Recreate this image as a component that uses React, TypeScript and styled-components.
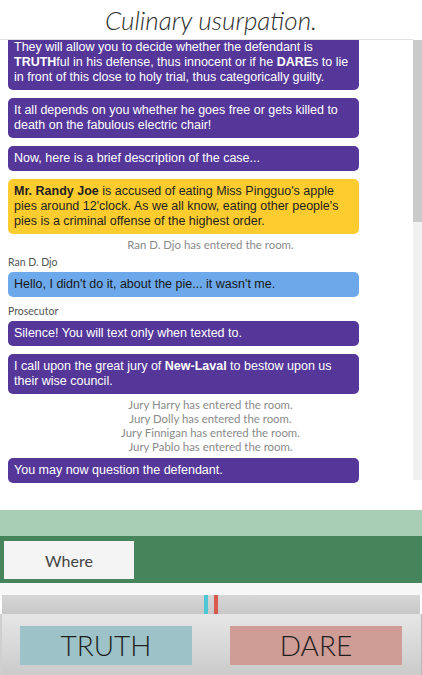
import React from "react";
import styled, { createGlobalStyle } from "styled-components";

const GlobalStyle = createGlobalStyle`
  html, body { margin: 0; padding: 0; background: #ffffff; overflow: hidden; }
  * { box-sizing: border-box; }
`;

const Page = styled.div`
  width: 422px;
  height: 675px;
  display: flex;
  flex-direction: column;
  background: #ffffff;
  overflow: hidden;
`;

const Header = styled.header`
  height: 40px;
  margin-right: 9px;
  border-bottom: 1px solid #e2e2e2;
  display: flex;
  align-items: center;
  justify-content: center;
  flex-shrink: 0;
`;

const Title = styled.h1`
  margin: 0 0 0 9px;
  font-family: Lato, "Open Sans", sans-serif;
  font-style: italic;
  font-weight: 300;
  font-size: 26px;
  line-height: 30px;
  color: #2e2e2e;
`;

const ChatRow = styled.div`
  height: 443px;
  display: flex;
  flex-shrink: 0;
`;

const Messages = styled.div`
  flex: 1;
  overflow: hidden;
  display: flex;
  flex-direction: column;
  justify-content: flex-end;
  padding: 0 0 0 8px;
`;

const ScrollTrack = styled.div`
  width: 9px;
  height: 440px;
  background: #f1f1f1;
  display: flex;
  flex-direction: column;
`;

const ScrollThumb = styled.div`
  height: 182px;
  background: #cacaca;
`;

type Tone = "purple" | "yellow" | "blue";

const toneBg: Record<Tone, string> = {
  purple: "#55379a",
  yellow: "#fecc2f",
  blue: "#6da9ea",
};
const toneFg: Record<Tone, string> = {
  purple: "#ffffff",
  yellow: "#1f1f1f",
  blue: "#161616",
};

const Bubble = styled.div<{ $tone: Tone; $last?: boolean }>`
  flex-shrink: 0;
  width: 351px;
  margin-bottom: ${(p) => (p.$last ? "0" : "8px")};
  padding: 5px 6px;
  border-radius: 5px;
  background: ${(p) => toneBg[p.$tone]};
  color: ${(p) => toneFg[p.$tone]};
  font-family: "Liberation Sans", Arial, sans-serif;
  font-size: 12.5px;
  line-height: 15px;

  b {
    font-weight: 700;
  }
`;

const SystemNotes = styled.div`
  flex-shrink: 0;
  margin: -4px 0 4px;
  text-align: center;
  font-family: Lato, "Open Sans", sans-serif;
  font-size: 11.4px;
  line-height: 14px;
  color: #8a8a8a;
`;

const Sender = styled.div`
  flex-shrink: 0;
  margin: -1px 0 3px;
  font-family: Lato, "Open Sans", sans-serif;
  font-size: 10.5px;
  line-height: 14px;
  color: #555555;
`;

const Spacer = styled.div`
  height: 27px;
  flex-shrink: 0;
`;

const GreenBand = styled.div`
  height: 26px;
  background: #a8cfb5;
  flex-shrink: 0;
`;

const InputBar = styled.div`
  height: 47px;
  background: #46845b;
  display: flex;
  align-items: flex-start;
  padding: 5px 0 0 4px;
  flex-shrink: 0;
`;

const InputBox = styled.div`
  width: 130px;
  height: 38px;
  background: #f4f4f4;
  display: flex;
  align-items: center;
  justify-content: center;
  font-family: Lato, "Open Sans", sans-serif;
  font-size: 16px;
  color: #444444;
`;

const Gap = styled.div`
  height: 12px;
  background: #f7f7f7;
  flex-shrink: 0;
`;

const Meter = styled.div`
  height: 19px;
  margin: 0 2px;
  background: linear-gradient(#d6d6d6, #c8c8c8);
  display: flex;
  justify-content: center;
  gap: 6px;
  flex-shrink: 0;
`;

const Tick = styled.div<{ $color: string }>`
  width: 4px;
  height: 100%;
  background: ${(p) => p.$color};
`;

const Controls = styled.div`
  height: 61px;
  flex-shrink: 0;
  background: linear-gradient(#e6e6e6, #cbcbcb);
  border-left: 2px solid #cfcfcf;
  border-right: 1px solid #b8b8b8;
  display: flex;
  justify-content: space-between;
  align-items: flex-start;
  padding: 12px 19px 0 18px;
`;

const ChoiceButton = styled.button<{ $bg: string }>`
  width: 172px;
  height: 39px;
  border: none;
  border-radius: 0;
  padding: 0;
  background: ${(p) => p.$bg};
  font-family: Lato, "Open Sans", sans-serif;
  font-weight: 300;
  font-size: 28px;
  line-height: 39px;
  color: #1f1f1f;
  cursor: pointer;
`;

export default function App() {
  return (
    <>
      <GlobalStyle />
      <Page>
        <Header>
          <Title>Culinary usurpation.</Title>
        </Header>
        <ChatRow>
          <Messages>
            <Bubble $tone="purple">
              They will allow you to decide whether the defendant is <b>TRUTH</b>ful in his defense, thus innocent or if he{" "}
              <b>DARE</b>s to lie in front of this close to holy trial, thus categorically guilty.
            </Bubble>
            <Bubble $tone="purple">
              It all depends on you whether he goes free or gets killed to death on the fabulous electric chair!
            </Bubble>
            <Bubble $tone="purple">Now, here is a brief description of the case...</Bubble>
            <Bubble $tone="yellow">
              <b>Mr. Randy Joe</b> is accused of eating Miss Pingguo's apple pies around 12'clock. As we all know, eating
              other people's pies is a criminal offense of the highest order.
            </Bubble>
            <SystemNotes>Ran D. Djo has entered the room.</SystemNotes>
            <Sender>Ran D. Djo</Sender>
            <Bubble $tone="blue">Hello, I didn't do it, about the pie... it wasn't me.</Bubble>
            <Sender>Prosecutor</Sender>
            <Bubble $tone="purple">Silence! You will text only when texted to.</Bubble>
            <Bubble $tone="purple">
              I call upon the great jury of <b>New-Laval</b> to bestow upon us their wise council.
            </Bubble>
            <SystemNotes>
              <div>Jury Harry has entered the room.</div>
              <div>Jury Dolly has entered the room.</div>
              <div>Jury Finnigan has entered the room.</div>
              <div>Jury Pablo has entered the room.</div>
            </SystemNotes>
            <Bubble $tone="purple" $last>
              You may now question the defendant.
            </Bubble>
          </Messages>
          <ScrollTrack>
            <ScrollThumb />
          </ScrollTrack>
        </ChatRow>
        <Spacer />
        <GreenBand />
        <InputBar>
          <InputBox>Where</InputBox>
        </InputBar>
        <Gap />
        <Meter>
          <Tick $color="#4fc6d6" />
          <Tick $color="#d9594d" />
        </Meter>
        <Controls>
          <ChoiceButton $bg="#9dc3c9">TRUTH</ChoiceButton>
          <ChoiceButton $bg="#cf9c96">DARE</ChoiceButton>
        </Controls>
      </Page>
    </>
  );
}
